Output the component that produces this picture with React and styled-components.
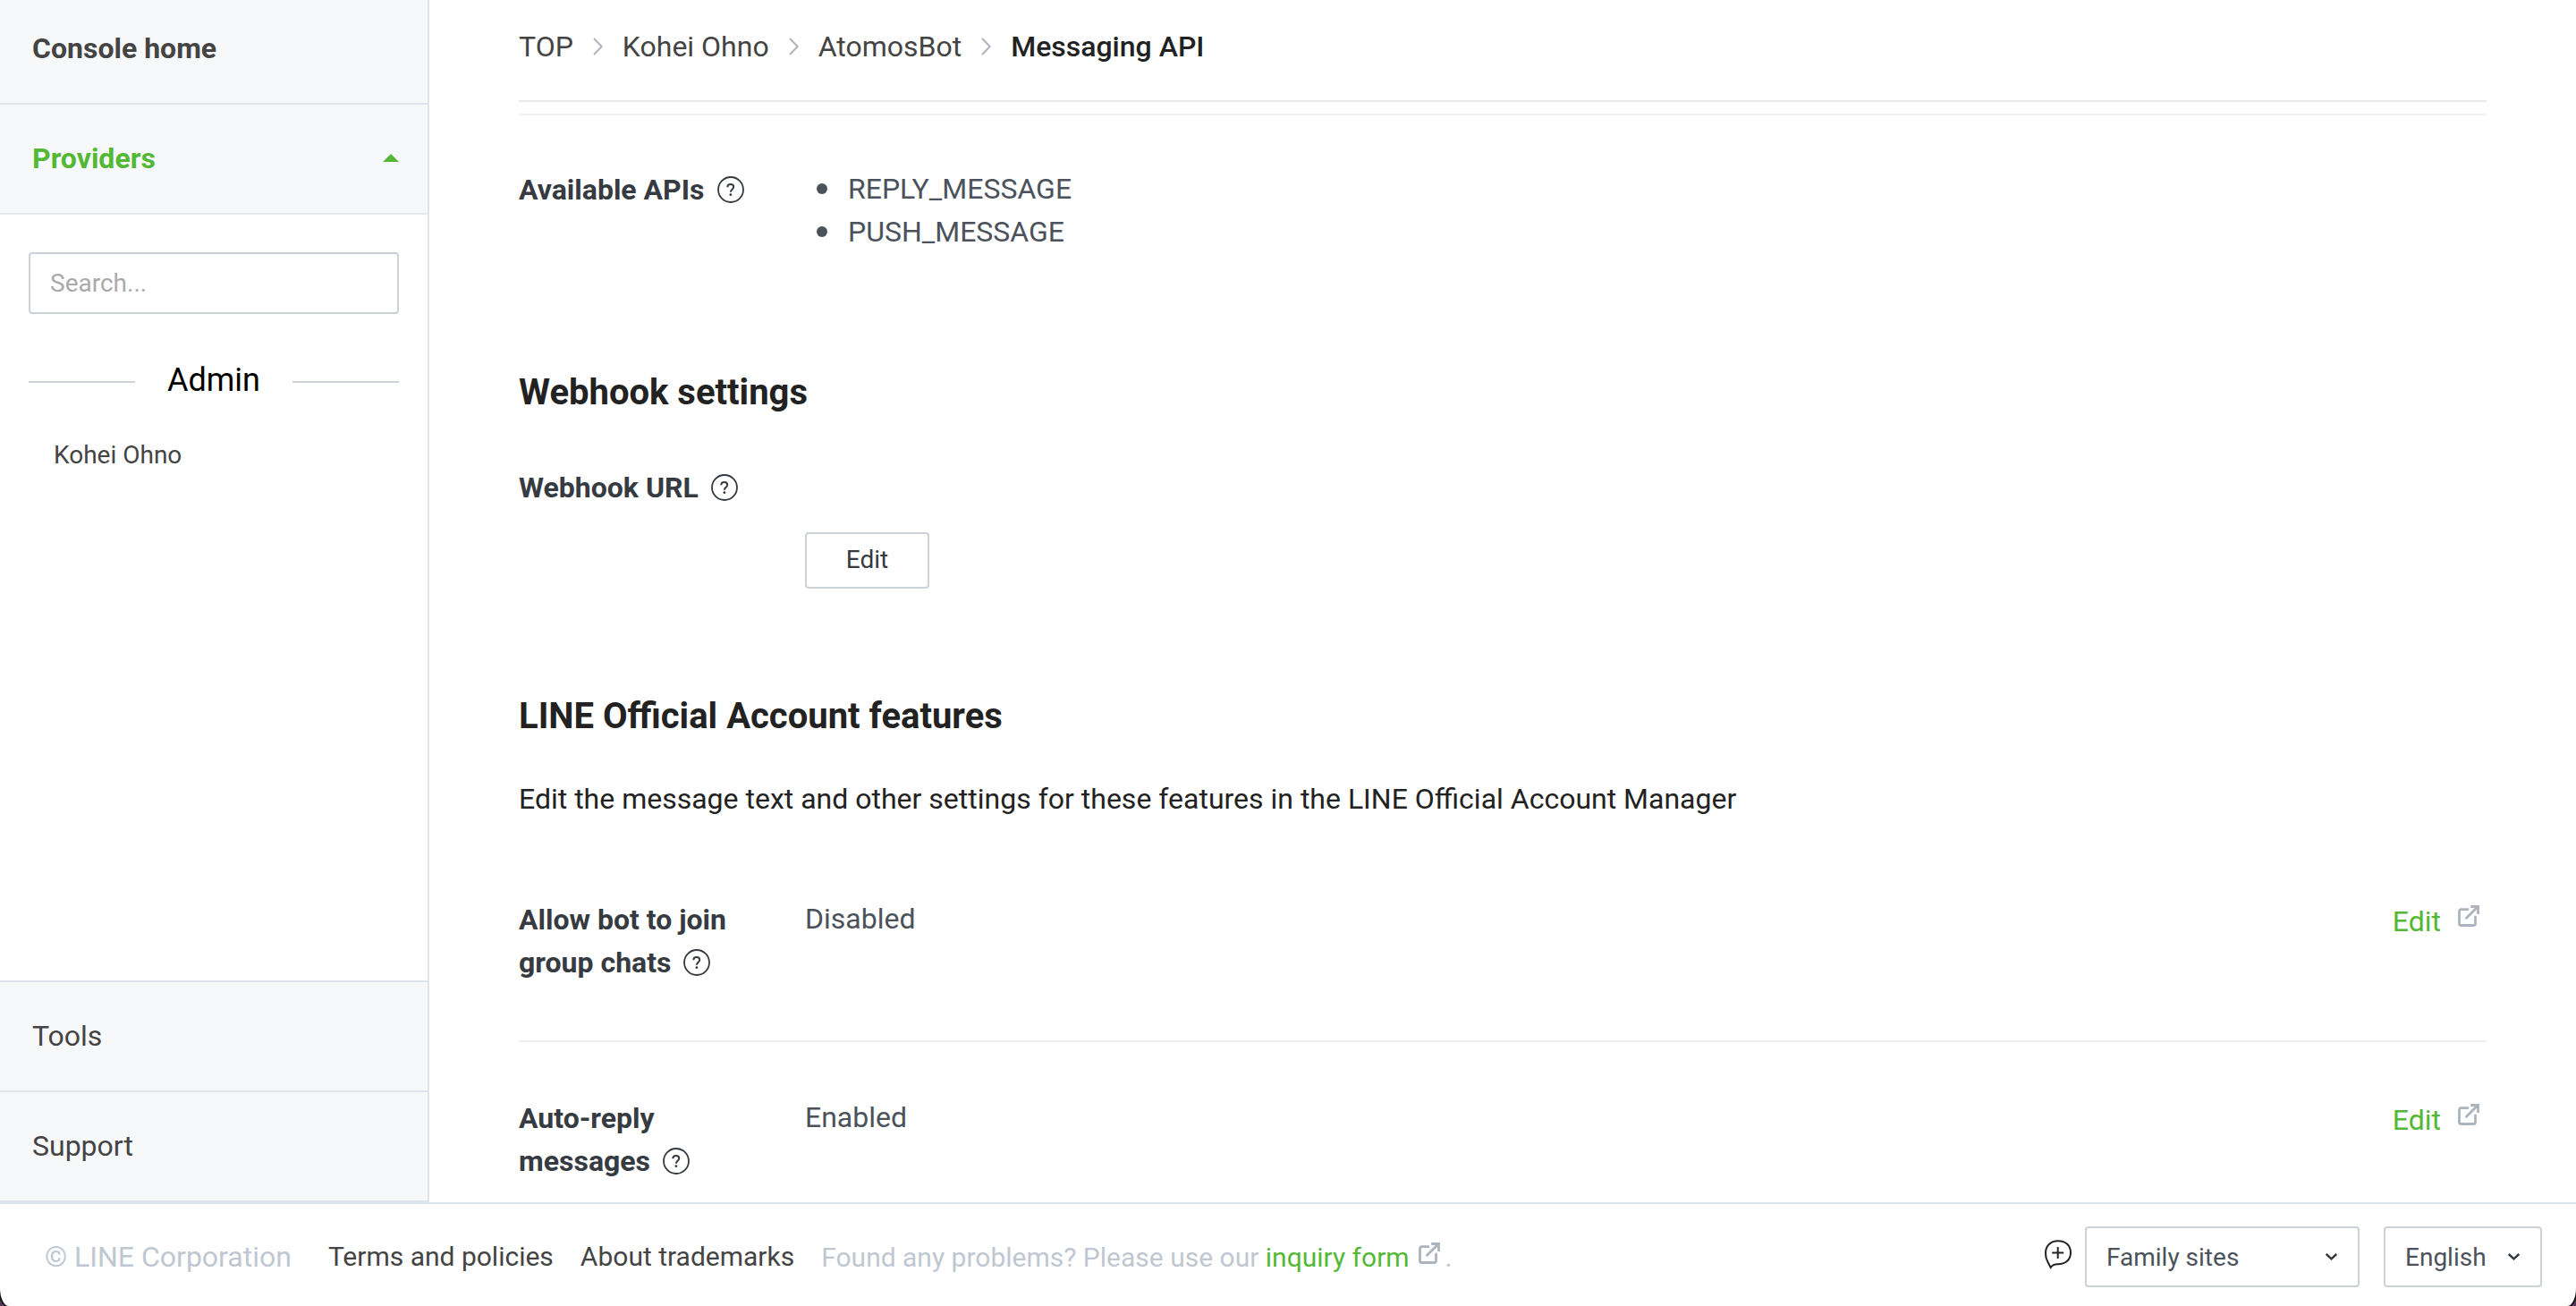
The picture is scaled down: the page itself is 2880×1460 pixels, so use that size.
import React from "react";
import styled, { createGlobalStyle } from "styled-components";

const GlobalStyle = createGlobalStyle`
  * { box-sizing: border-box; }
  body {
    margin: 0;
    background: #5a3a5c;
    font-family: Roboto, "Liberation Sans", sans-serif;
    font-size: 32px;
    line-height: 48px;
    color: #222;
  }
  ul, ol, h2, p { margin: 0; padding: 0; }
  a { color: inherit; text-decoration: none; }
  button, input, select { font-family: inherit; }
`;

const Page = styled.div`
  display: flex;
  flex-direction: column;
  height: 100vh;
  overflow: hidden;
  background: #fff;
  border-radius: 0 0 10px 10px / 0 0 20px 20px;
  box-shadow: 0 0 0 2px #111;
`;

const Body = styled.div`
  display: flex;
  flex: 1;
  min-height: 0;
`;

const Sidebar = styled.nav`
  display: flex;
  flex-direction: column;
  width: 480px;
  flex: none;
  border-right: 2px solid #dfe4ea;
`;

const HomeLink = styled.a`
  padding: 30px 36px 37px;
  background: #f7f8fa;
  border-bottom: 2px solid #dfe4ea;
  color: #444;
  font-weight: 700;
`;

const SectionButton = styled.button`
  display: flex;
  align-items: center;
  justify-content: space-between;
  width: 100%;
  height: 123px;
  padding: 0 32px 2px 36px;
  background: #f7f8fa;
  border: 0 solid #dfe4ea;
  border-bottom-width: 2px;
  border-bottom-color: ${(p) => (p.$open ? "#e6e8eb" : "#dfe4ea")};
  font-size: 32px;
  line-height: 48px;
  font-weight: ${(p) => (p.$open ? 700 : 400)};
  color: ${(p) => (p.$open ? "#53b835" : "#444")};
`;

const ProviderPanel = styled.div`
  flex: 1;
  padding: 42px 32px;
`;

const SearchInput = styled.input`
  display: block;
  width: 100%;
  height: 69px;
  padding: 0 22px;
  border: 2px solid #cdd2d8;
  border-radius: 4px;
  font-size: 28px;
  color: #444;
  &::placeholder { color: #aaa; opacity: 1; }
`;

const GroupTitle = styled.div`
  display: flex;
  align-items: center;
  justify-content: center;
  margin-top: 50px;
  gap: 36px;
  font-size: 36px;
  color: #000;
  &::before, &::after {
    content: "";
    flex: 1;
    height: 2px;
    margin-top: 4px;
    background: #ced3da;
  }
`;

const ProviderLink = styled.a`
  display: block;
  padding: 36px 28px;
  font-size: 28px;
  color: #444;
`;

const BottomMenu = styled.div`
  border-top: 2px solid #dfe4ea;
`;

const Main = styled.main`
  display: flex;
  flex-direction: column;
  flex: 1;
  min-width: 0;
  padding: 0 100px;
  overflow: hidden;
`;

const Breadcrumbs = styled.ol`
  display: flex;
  align-items: center;
  flex: none;
  height: 114px;
  padding-bottom: 8px;
  border-bottom: 2px solid #e9e9e9;
  list-style: none;
`;

const Crumb = styled.li`
  display: flex;
  align-items: center;
  font-weight: ${(p) => (p.$current ? 500 : 400)};
  color: ${(p) => (p.$current ? "#222" : "#444")};
  svg { margin: 0 22px; }
`;

const Content = styled.div`
  margin-top: 13px;
  border-top: 2px solid #efefef;
`;

const Section = styled.section`
  padding-top: ${(p) => p.$top};
`;

const Heading = styled.h2`
  font-size: 40px;
  line-height: 60px;
  font-weight: 700;
  color: #222;
`;

const Lead = styled.p`
  margin-top: 38px;
`;

const Row = styled.div`
  display: grid;
  grid-template-columns: 320px 1fr auto;
  padding-top: ${(p) => p.$top};
  padding-bottom: ${(p) => p.$bottom || 0};
  border-bottom: ${(p) => (p.$line ? "2px solid #eeeff1" : "0")};
`;

const Term = styled.div`
  max-width: 280px;
  padding-top: 1px;
  font-weight: 700;
  color: #363a41;
  svg { margin-left: 14px; vertical-align: -4px; }
`;

const Value = styled.div`
  color: #4b525b;
`;

const ApiList = styled.ul`
  list-style: none;
  padding-left: 13px;
  color: #4b525b;
`;

const ApiItem = styled.li`
  display: flex;
  align-items: center;
  gap: 23px;
  &::before {
    content: "";
    width: 12px;
    height: 12px;
    border-radius: 50%;
    background: currentColor;
  }
`;

const EditButton = styled.button`
  display: block;
  width: 139px;
  height: 63px;
  margin-top: 75px;
  padding: 0 0 2px;
  background: #fff;
  border: 2px solid #cdd2d8;
  border-radius: 4px;
  font-size: 28px;
  color: #363a41;
`;

const EditLink = styled.a`
  display: flex;
  padding: 3px 8px 0 0;
  gap: 19px;
  color: #53b835;
  svg { margin-top: 6px; }
`;

const Footer = styled.footer`
  display: flex;
  align-items: center;
  flex: none;
  height: 116px;
  padding: 4px 38px 0 50px;
  border-top: 2px solid #dfe4ea;
  font-size: 30px;
  color: #444;
`;

const Copyright = styled.span`
  margin-right: 41px;
  font-size: 32px;
  color: #bfc7d1;
`;

const FooterLink = styled.a`
  margin-right: 30px;
`;

const Inquiry = styled.span`
  flex: 1;
  padding-top: 2px;
  color: #bfc7d1;
  a { color: #53b835; }
  svg { margin: 0 6px 0 10px; vertical-align: 3px; }
`;

const IconButton = styled.button`
  display: flex;
  margin-right: 15px;
  padding: 0 0 6px;
  border: 0;
  background: none;
`;

const SelectBox = styled.label`
  position: relative;
  display: flex;
  width: ${(p) => p.$width};
  margin-left: ${(p) => p.$gap || 0};
  svg {
    position: absolute;
    right: 25px;
    top: 50%;
    margin-top: -4px;
    pointer-events: none;
  }
`;

const Select = styled.select`
  appearance: none;
  width: 100%;
  height: 68px;
  padding: 0 22px;
  background: #fff;
  border: 2px solid #cdd2d8;
  border-radius: 4px;
  font-size: 28px;
  color: #4b525b;
`;

const Help = () => (
  <svg width="30" height="30" viewBox="0 0 30 30" fill="none" stroke="#363a41" role="img" aria-label="Help">
    <circle cx="15" cy="15" r="14" strokeWidth="1.8" />
    <path d="M11.3 12.2c0-2.100 1.400-3.300 3.500-3.300s3.400 1.200 3.400 3c0 2.700-3.300 2.800-3.300 5.800" strokeWidth="2" />
    <circle cx="14.9" cy="20.700" r="1.400" fill="#363a41" stroke="none" />
  </svg>
);

const External = () => (
  <svg width="24" height="24" viewBox="0 0 24 24" fill="none" stroke="#adb4bd" strokeWidth="2.8" aria-hidden="true">
    <path d="M11 4.700H3.500a2 2 0 0 0-2 2v13.800a2 2 0 0 0 2 2h14a2 2 0 0 0 2-2V13" strokeLinecap="round" />
    <path d="M9.500 14.200L21 2.800" strokeLinecap="round" />
    <path d="M14.200 1.500h8.300V10" />
  </svg>
);

const Separator = () => (
  <svg width="11" height="20" viewBox="0 0 11 20" fill="none" stroke="#adb4bd" strokeWidth="2" aria-hidden="true">
    <path d="M1 1l8.700 9L1 19" />
  </svg>
);

const Chevron = () => (
  <svg width="13" height="8" viewBox="0 0 13 8" fill="none" stroke="#363a41" strokeWidth="2.400" aria-hidden="true">
    <path d="M.8 1l5.700 5.300L12.200 1" />
  </svg>
);

const Feedback = () => (
  <svg width="30" height="33" viewBox="0 0 30 33" fill="none" stroke="#222" strokeWidth="2" aria-hidden="true">
    <path d="M6.700 31L3.200 24.300C1.600 21.600 1 18.500 1 14.800 1 6.600 6.700 1.200 15 1.200c8.400 0 14 5.200 14 13 0 8.200-5.600 13-14.500 13-3.800 0-6 .9-7.800 3.800z" />
    <path d="M14.700 8v13M8.200 14.500h13" />
  </svg>
);

const features = [
  { name: "Allow bot to join group chats", value: "Disabled", bottom: "63px", top: "86px" },
  { name: "Auto-reply messages", value: "Enabled", bottom: "63px", top: "60px" },
];

const crumbs = ["TOP", "Kohei Ohno", "AtomosBot", "Messaging API"];

export default function App() {
  return (
    <Page>
      <GlobalStyle />
      <Body>
        <Sidebar>
          <HomeLink href="#">Console home</HomeLink>
          <SectionButton $open aria-expanded="true">
            Providers
            <svg width="18" height="9" viewBox="0 0 18 9" aria-hidden="true">
              <path d="M0 9L9 0l9 9z" fill="#53b835" />
            </svg>
          </SectionButton>
          <ProviderPanel>
            <SearchInput type="search" placeholder="Search..." aria-label="Search providers" />
            <GroupTitle>Admin</GroupTitle>
            <ProviderLink href="#">Kohei Ohno</ProviderLink>
          </ProviderPanel>
          <BottomMenu>
            <SectionButton>Tools</SectionButton>
            <SectionButton>Support</SectionButton>
          </BottomMenu>
        </Sidebar>
        <Main>
          <Breadcrumbs>
            {crumbs.map((name, i) => {
              const current = i === crumbs.length - 1;
              return (
                <Crumb key={name} $current={current}>
                  {current ? name : <a href="#">{name}</a>}
                  {!current && <Separator />}
                </Crumb>
              );
            })}
          </Breadcrumbs>
          <Content>
            <Row $top="58px">
              <Term>Available APIs<Help /></Term>
              <ApiList>
                <ApiItem>REPLY_MESSAGE</ApiItem>
                <ApiItem>PUSH_MESSAGE</ApiItem>
              </ApiList>
            </Row>
            <Section $top="126px">
              <Heading>Webhook settings</Heading>
              <Row $top="51px">
                <Term>Webhook URL<Help /></Term>
                <EditButton>Edit</EditButton>
              </Row>
            </Section>
            <Section $top="113px">
              <Heading>LINE Official Account features</Heading>
              <Lead>Edit the message text and other settings for these features in the LINE Official Account Manager</Lead>
              {features.map((f) => (
                <Row key={f.name} $top={f.top} $bottom={f.bottom} $line>
                  <Term>{f.name}<Help /></Term>
                  <Value>{f.value}</Value>
                  <EditLink href="#">Edit<External /></EditLink>
                </Row>
              ))}
            </Section>
          </Content>
        </Main>
      </Body>
      <Footer>
        <Copyright>© LINE Corporation</Copyright>
        <FooterLink href="#">Terms and policies</FooterLink>
        <FooterLink href="#">About trademarks</FooterLink>
        <Inquiry>
          Found any problems? Please use our <a href="#">inquiry form<External /></a>.
        </Inquiry>
        <IconButton aria-label="Send feedback"><Feedback /></IconButton>
        <SelectBox $width="307px">
          <Select aria-label="Family sites"><option>Family sites</option></Select>
          <Chevron />
        </SelectBox>
        <SelectBox $width="177px" $gap="27px">
          <Select aria-label="Language"><option>English</option></Select>
          <Chevron />
        </SelectBox>
      </Footer>
    </Page>
  );
}
